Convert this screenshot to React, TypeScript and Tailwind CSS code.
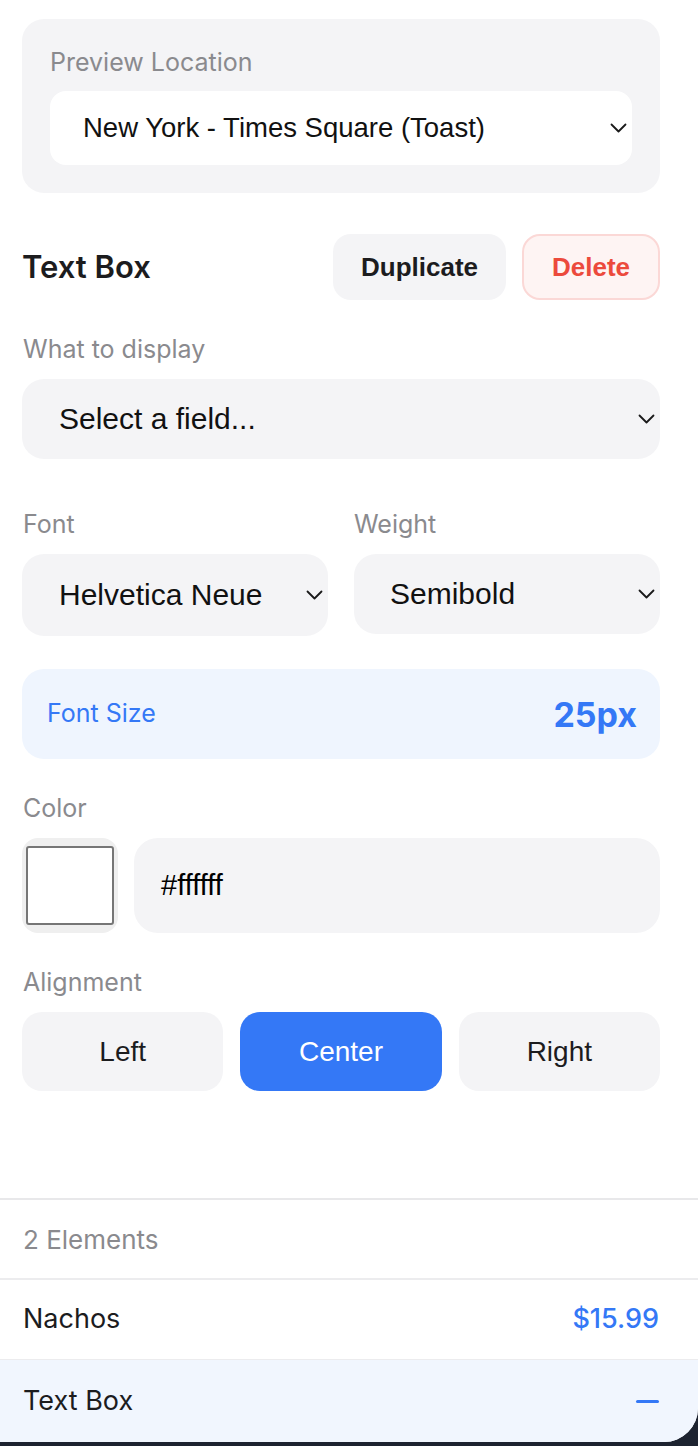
import React from 'react';

const LABEL = "font-['Inter',sans-serif] text-[25px] leading-[30px] text-[#8a8a8e]";
const CONTROL = "font-['Liberation_Sans',Arial,sans-serif] text-[#111]";

function Chevron() {
  return (
    <svg width="17" height="10" viewBox="0 0 17 10" fill="none" className="shrink-0">
      <path d="M1.5 1.5 L8.5 8.5 L15.5 1.5" stroke="#1a1a1a" strokeWidth="1.8" strokeLinecap="round" strokeLinejoin="round" />
    </svg>
  );
}

function SelectBox({
  value,
  className = '',
  textClass = 'text-[30px]',
  padLeft = 'pl-[37px]',
}: {
  value: string;
  className?: string;
  textClass?: string;
  padLeft?: string;
}) {
  return (
    <div className={`flex items-center justify-between pr-[5px] ${padLeft} ${className}`}>
      <span className={`${CONTROL} ${textClass} leading-none`}>{value}</span>
      <Chevron />
    </div>
  );
}

const ALIGN = ['Left', 'Center', 'Right'];

export default function App() {
  return (
    <div className="min-h-screen bg-[#1d2330]">
      <div className="h-[1442px] bg-white rounded-br-[34px] overflow-hidden flex flex-col">
        <div className="pl-[22px] pr-[38px] pt-[19px] flex flex-col">
          {/* Preview location */}
          <div className="rounded-[22px] bg-[#f4f4f6] px-[28px] py-[28px]">
            <p className={`${LABEL} text-[24px]`}>Preview Location</p>
            <SelectBox
              value="New York - Times Square (Toast)"
              textClass="text-[27.5px]"
              padLeft="pl-[33px]"
              className="mt-[14px] h-[74px] bg-white rounded-[16px]"
            />
          </div>

          {/* Header */}
          <div className="mt-[41px] h-[66px] flex items-center justify-between">
            <h2 className="font-['Inter',sans-serif] text-[31px] font-semibold text-[#1c1c1e]">Text Box</h2>
            <div className="flex gap-[16px]">
              <button className="w-[173px] h-[66px] rounded-[18px] bg-[#f4f4f6] font-['Liberation_Sans',Arial,sans-serif] text-[26px] font-bold text-[#1c1c1e]">
                Duplicate
              </button>
              <button className="w-[138px] h-[66px] rounded-[18px] bg-[#fef4f3] border-2 border-[#fbd8d6] font-['Liberation_Sans',Arial,sans-serif] text-[26px] font-bold text-[#ec4a3c]">
                Delete
              </button>
            </div>
          </div>

          {/* What to display */}
          <div className="mt-[34px]">
            <p className={`${LABEL} pl-[1px]`}>What to display</p>
            <SelectBox value="Select a field..." className="mt-[15px] h-[80px] bg-[#f4f4f6] rounded-[22px]" />
          </div>

          {/* Font / Weight */}
          <div className="mt-[50px] grid grid-cols-2 gap-[26px] items-start">
            <div>
              <p className={`${LABEL} pl-[1px]`}>Font</p>
              <SelectBox
                value="Helvetica Neue"
                className="mt-[15px] h-[82px] bg-[#f4f4f6] rounded-[22px] pr-[4px]"
              />
            </div>
            <div>
              <p className={LABEL}>Weight</p>
              <SelectBox
                value="Semibold"
                padLeft="pl-[36px]"
                className="mt-[15px] h-[80px] bg-[#f4f4f6] rounded-[22px]"
              />
            </div>
          </div>

          {/* Font size */}
          <div className="mt-[33px] h-[90px] rounded-[22px] bg-[#eff5fe] flex items-center justify-between pl-[25px] pr-[23px]">
            <span className="font-['Inter',sans-serif] text-[25px] text-[#3478f6]">Font Size</span>
            <span className="font-['Inter',sans-serif] text-[34px] font-bold text-[#3478f6]">25px</span>
          </div>

          {/* Color */}
          <div className="mt-[34px]">
            <p className={`${LABEL} pl-[1px]`}>Color</p>
            <div className="mt-[15px] flex gap-[16px] h-[95px]">
              <div className="w-[96px] rounded-[16px] bg-[#efefef] px-[4px] py-[8px]">
                <div className="w-full h-full bg-white border-2 border-[#767676] rounded-[3px]" />
              </div>
              <div className="flex-1 rounded-[24px] bg-[#f4f4f6] flex items-center pl-[27px]">
                <span className={`${CONTROL} text-[29px] text-black`}>#ffffff</span>
              </div>
            </div>
          </div>

          {/* Alignment */}
          <div className="mt-[34px]">
            <p className={`${LABEL} pl-[1px]`}>Alignment</p>
            <div className="mt-[15px] grid grid-cols-3 gap-[17px]">
              {ALIGN.map((a) => (
                <button
                  key={a}
                  className={`h-[79px] rounded-[20px] font-['Liberation_Sans',Arial,sans-serif] text-[28px] ${
                    a === 'Center' ? 'bg-[#3478f6] text-white' : 'bg-[#f4f4f6] text-[#1c1c1e]'
                  }`}
                >
                  {a}
                </button>
              ))}
            </div>
          </div>
        </div>

        <div className="flex-1" />

        {/* Elements list */}
        <div className="border-t-2 border-[#e8e8ea] font-['Inter',sans-serif]">
          <div className="h-[78px] flex items-center px-[23px] text-[26px] text-[#8a8a8e]">2 Elements</div>
          <div className="h-[81px] border-t-2 border-[#ececee] flex items-center justify-between pl-[23px] pr-[39px] text-[27px]">
            <span className="text-[#1c1c1e]">Nachos</span>
            <span className="text-[#3478f6] font-medium">$15.99</span>
          </div>
          <div className="h-[83px] border-t border-[#ececee] bg-[#f1f6fe] flex items-center justify-between pl-[23px] pr-[39px] text-[27px]">
            <span className="text-[#1c1c1e]">Text Box</span>
            <span className="block w-[23px] h-[3px] rounded-full bg-[#3478f6]" />
          </div>
        </div>
      </div>
    </div>
  );
}
